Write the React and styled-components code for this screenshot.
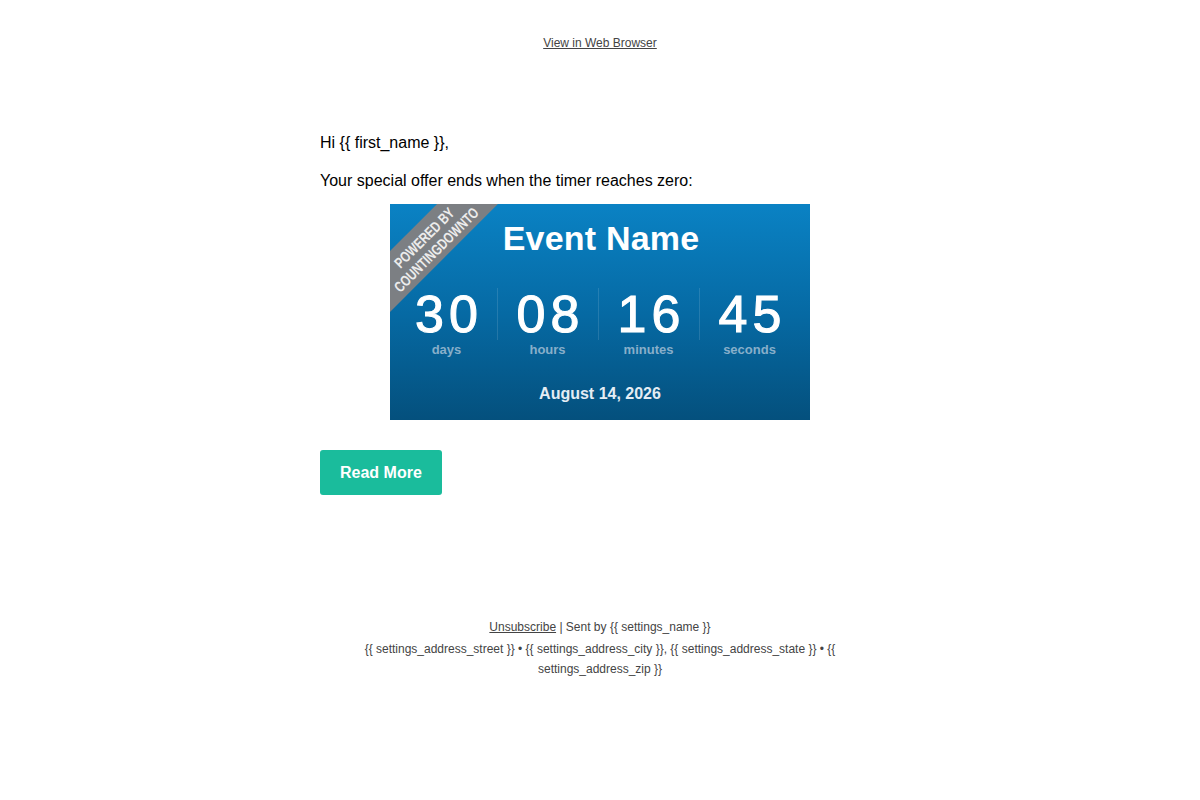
import styled, { createGlobalStyle } from "styled-components";

const GlobalStyle = createGlobalStyle`
  body {
    margin: 0;
    background: #ffffff;
    font-family: "Liberation Sans", Arial, Helvetica, sans-serif;
    color: #000;
  }
`;

const Page = styled.div`
  width: 1200px;
  min-height: 800px;
  display: flex;
  flex-direction: column;
  align-items: center;
`;

const TopBar = styled.div`
  padding-top: 34px;
  font-size: 12px;
  line-height: 18px;
  text-align: center;
`;

const TextLink = styled.a`
  color: #444;
  text-decoration: underline;
  cursor: pointer;
`;

const Content = styled.div`
  width: 560px;
  padding-top: 80px;
  display: flex;
  flex-direction: column;
  align-items: flex-start;
`;

const Para = styled.p`
  margin: ${(p) => (p.$first ? "0" : "16px 0 0")};
  font-size: 16px;
  line-height: 22px;
  color: #000;
`;

const Timer = styled.div`
  position: relative;
  align-self: center;
  margin-top: 12px;
  width: 420px;
  height: 216px;
  overflow: hidden;
  box-sizing: border-box;
  padding-top: 14px;
  background: linear-gradient(180deg, #0a82c4 0%, #066aa4 50%, #04507d 100%);
  color: #fff;
  display: flex;
  flex-direction: column;
  align-items: center;
`;

/* corner banner, sits over the top-left of the timer */
const Ribbon = styled.div`
  position: absolute;
  left: -71px;
  top: 17px;
  width: 220px;
  height: 43px;
  background: #7c7f83;
  transform: rotate(-45deg);
  display: flex;
  align-items: center;
  justify-content: center;
`;

const RibbonText = styled.div`
  padding-top: 3px;
  font-size: 15px;
  line-height: 17px;
  font-weight: bold;
  color: #ececec;
  text-align: center;
  text-transform: uppercase;
  transform: scaleX(0.76);
  white-space: nowrap;
`;

const Title = styled.div`
  font-size: 34px;
  line-height: 40px;
  font-weight: bold;
  letter-spacing: 0.2px;
  padding-left: 2px;
`;

const Units = styled.div`
  margin-top: 30px;
  margin-right: 4px;
  width: 404px;
  display: grid;
  grid-template-columns: repeat(4, 1fr);
`;

const Unit = styled.div`
  display: flex;
  flex-direction: column;
  align-items: center;
`;

const Number = styled.div`
  align-self: stretch;
  text-align: center;
  font-size: 52px;
  line-height: 52px;
  letter-spacing: 5px;
  text-indent: 5px;
  -webkit-text-stroke: 1.1px #fff;
  border-left: ${(p) => (p.$first ? "none" : "1px solid rgba(255, 255, 255, 0.12)")};
`;

const Label = styled.div`
  margin-top: 2px;
  font-size: 13px;
  line-height: 16px;
  font-weight: bold;
  color: #88afca;
`;

const DateLine = styled.div`
  margin-top: 26px;
  font-size: 16px;
  line-height: 20px;
  font-weight: bold;
  color: #e4edf4;
`;

const Button = styled.a`
  margin-top: 30px;
  height: 45px;
  padding: 0 20px;
  display: flex;
  align-items: center;
  background: #1abc9c;
  border-radius: 3px;
  color: #fff;
  font-size: 16px;
  font-weight: bold;
  text-decoration: none;
  cursor: pointer;
`;

const Footer = styled.div`
  margin-top: 122px;
  width: 500px;
  font-size: 12px;
  line-height: 20px;
  color: #444;
  text-align: center;
`;

const FooterLine = styled.div`
  margin-top: ${(p) => (p.$gap ? "2px" : "0")};
`;

const units = [
  { value: "30", label: "days" },
  { value: "08", label: "hours" },
  { value: "16", label: "minutes" },
  { value: "45", label: "seconds" },
];

const address =
  "{{ settings_address_street }} • {{ settings_address_city }}, {{ settings_address_state }} • {{ settings_address_zip }}";

export default function App() {
  return (
    <>
      <GlobalStyle />
      <Page>
        <TopBar>
          <TextLink>View in Web Browser</TextLink>
        </TopBar>

        <Content>
          <Para $first>{"Hi {{ first_name }},"}</Para>
          <Para>Your special offer ends when the timer reaches zero:</Para>

          <Timer>
            <Ribbon>
              <RibbonText>
                Powered by
                <br />
                Countingdownto
              </RibbonText>
            </Ribbon>
            <Title>Event Name</Title>
            <Units>
              {units.map((u, i) => (
                <Unit key={u.label}>
                  <Number $first={i === 0}>{u.value}</Number>
                  <Label>{u.label}</Label>
                </Unit>
              ))}
            </Units>
            <DateLine>August 14, 2026</DateLine>
          </Timer>

          <Button>Read More</Button>
        </Content>

        <Footer>
          <FooterLine>
            <TextLink>Unsubscribe</TextLink>
            {" | Sent by {{ settings_name }}"}
          </FooterLine>
          <FooterLine $gap>{address}</FooterLine>
        </Footer>
      </Page>
    </>
  );
}
